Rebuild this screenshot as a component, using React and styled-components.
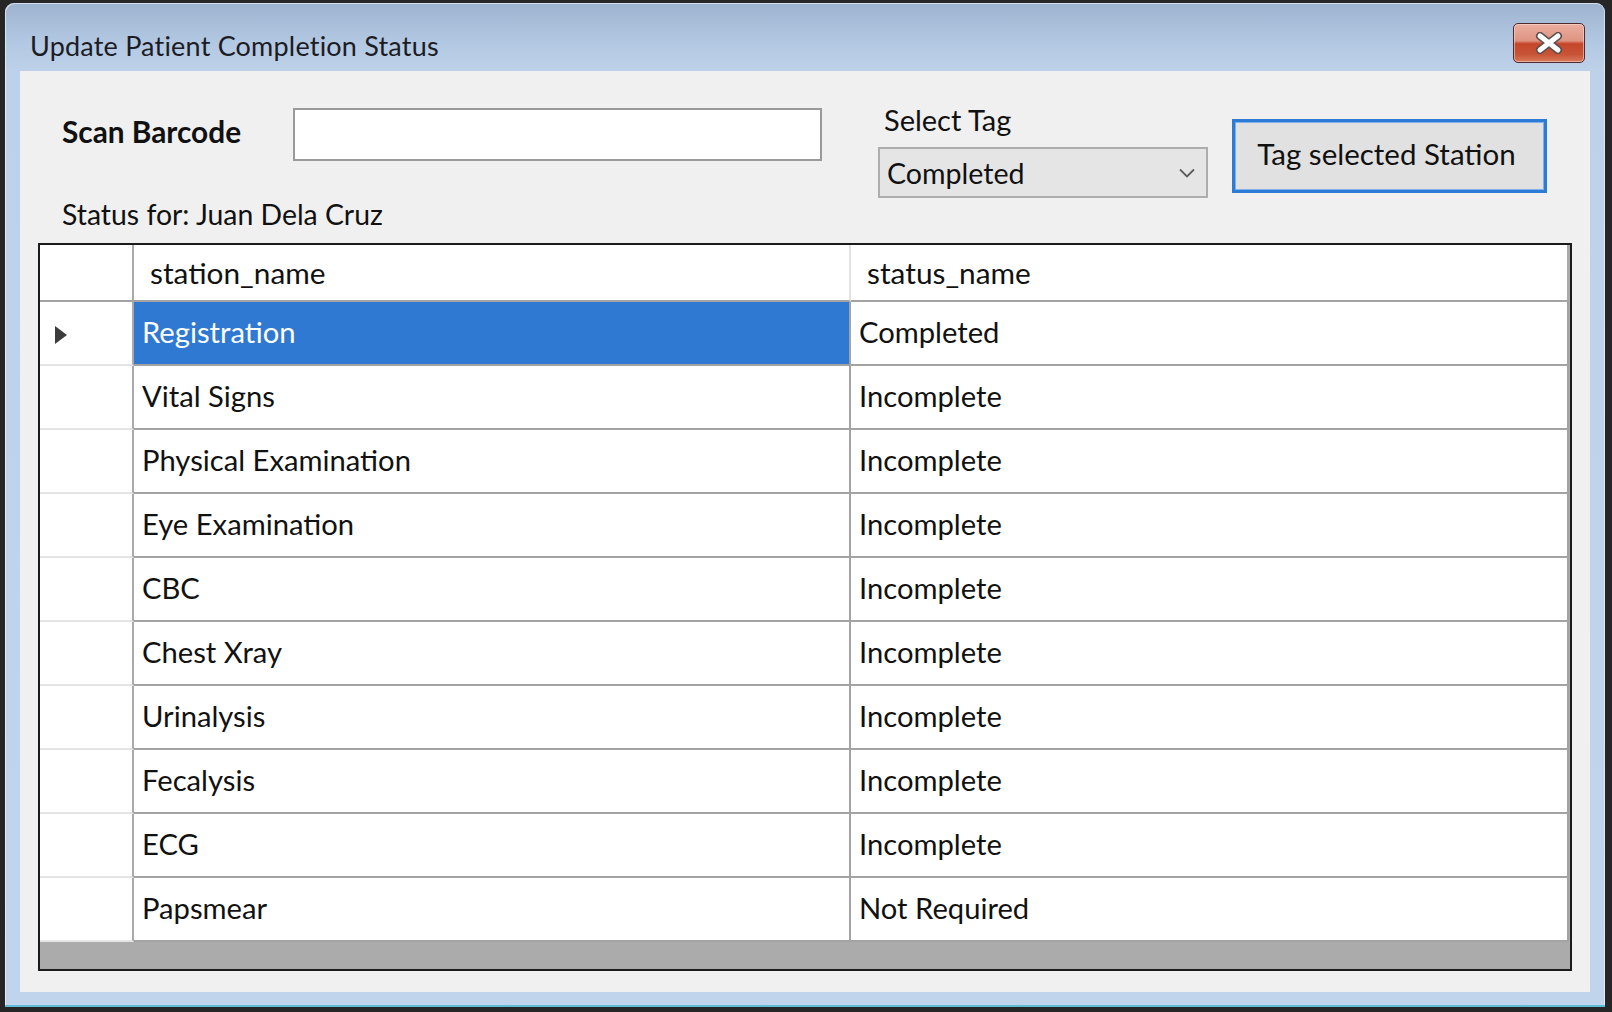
import React from "react";
import styled, { createGlobalStyle } from "styled-components";

const GlobalStyle = createGlobalStyle`
  html, body {
    margin: 0;
    padding: 0;
    width: 1612px;
    height: 1012px;
    overflow: hidden;
    background: #262626;
  }
  * { box-sizing: border-box; }
`;

const FONT = `Lato, "Open Sans", "Liberation Sans", sans-serif`;

const Window = styled.div`
  margin: 3px 7px 5px 5px;
  width: 1600px;
  height: 1004px;
  border-radius: 9px 9px 0 0;
  background: linear-gradient(to bottom, #9db3cf 0px, #b3c8e2 40px, #bdd1e9 68px, #c0d4eb 100%);
  border-bottom: 2px solid #5fbdd6;
  box-shadow: inset 1px 1px 0 rgba(255, 255, 255, 0.55), inset -1px 0 0 rgba(255, 255, 255, 0.5);
  display: flex;
  flex-direction: column;
  font-family: ${FONT};
`;

const TitleBar = styled.div`
  height: 68px;
  padding: 12px 20px 0 25px;
  display: flex;
  align-items: center;
  justify-content: space-between;
`;

const TitleText = styled.div`
  font-size: 27px;
  color: #1c1c24;
  letter-spacing: 0.2px;
  padding-top: 4px;
`;

const CloseButton = styled.div`
  width: 72px;
  height: 40px;
  border: 1px solid #4e2a30;
  border-radius: 5px;
  background: linear-gradient(
    to bottom,
    #ebaea0 0%,
    #df9482 44%,
    #c4462b 52%,
    #c75436 80%,
    #d8795d 100%
  );
  box-shadow: inset 0 0 0 1px rgba(255, 220, 210, 0.55);
  display: flex;
  align-items: center;
  justify-content: center;
`;

const Client = styled.div`
  flex: 1;
  margin: 0 15px 13px 15px;
  background: #f0f0f0;
  padding: 0 18px 21px 18px;
  display: flex;
  flex-direction: column;
`;

const Toolbar = styled.div`
  height: 172px;
  display: flex;
  align-items: flex-start;
`;

const LeftColumn = styled.div`
  padding-left: 24px;
  display: flex;
  flex-direction: column;
`;

const BarcodeRow = styled.div`
  margin-top: 37px;
  display: flex;
  align-items: center;
`;

const Label = styled.div`
  font-size: ${(p) => (p.$bold ? 29.8 : 29)}px;
  line-height: 36px;
  color: #111;
  font-weight: ${(p) => (p.$bold ? 700 : 400)};
  width: ${(p) => (p.$width ? `${p.$width}px` : "auto")};
  padding-left: ${(p) => (p.$indent ? `${p.$indent}px` : "0")};
  padding-bottom: ${(p) => (p.$bold ? 6 : 0)}px;
  white-space: nowrap;
`;

const TextInput = styled.div`
  width: 529px;
  height: 53px;
  background: #ffffff;
  border: 2px solid #9a9a9a;
`;

const StatusText = styled(Label)`
  margin-top: 35px;
  font-size: 28.4px;
`;

const TagColumn = styled.div`
  margin-left: 56px;
  padding-top: 31px;
  display: flex;
  flex-direction: column;
`;

const Select = styled.div`
  margin-top: 9px;
  width: 330px;
  height: 51px;
  background: #e5e5e5;
  border: 2px solid #adadad;
  padding: 0 11px 0 7px;
  display: flex;
  align-items: center;
  justify-content: space-between;
  font-size: 28.6px;
  color: #111;
`;

const ActionButton = styled.div`
  margin-left: 24px;
  margin-top: 48px;
  width: 315px;
  height: 74px;
  background: #e1e1e1;
  border: 3px solid #2e7bd6;
  box-shadow: inset 0 0 0 1px #7fb0ea;
  display: flex;
  align-items: center;
  justify-content: center;
  padding-bottom: 6px;
  padding-right: 6px;
  font-size: 29.5px;
  color: #111;
`;

const Grid = styled.div`
  flex: 1;
  border: 2px solid #1b1b1b;
  background: #ababab;
  display: flex;
  flex-direction: column;
`;

const Row = styled.div`
  display: grid;
  grid-template-columns: 94px 717px 718px;
  height: ${(p) => (p.$header ? 57 : 64)}px;
`;

const HeaderCell = styled.div`
  background: #ffffff;
  border-right: 2px solid ${(p) => (p.$light ? "#e2e2e2" : "#a9a9a9")};
  border-bottom: 2px solid #a3a3a3;
  padding-left: 16px;
  padding-bottom: 1px;
  display: flex;
  align-items: center;
  font-size: 29.8px;
  color: #111;
`;

const RowHeaderCell = styled.div`
  background: #ffffff;
  border-right: 2px solid #a9a9a9;
  border-bottom: 2px solid #e4e4e4;
  padding-left: 15px;
  padding-top: 4px;
  display: flex;
  align-items: center;
`;

const Cell = styled.div`
  background: ${(p) => (p.$selected ? "#3079d2" : "#ffffff")};
  color: ${(p) => (p.$selected ? "#ffffff" : "#111")};
  border-right: 2px solid #a3a3a3;
  border-bottom: 2px solid #a3a3a3;
  padding-left: 8px;
  padding-bottom: 3px;
  display: flex;
  align-items: center;
  font-size: 29.2px;
  white-space: nowrap;
`;

const rows = [
  ["Registration", "Completed"],
  ["Vital Signs", "Incomplete"],
  ["Physical Examination", "Incomplete"],
  ["Eye Examination", "Incomplete"],
  ["CBC", "Incomplete"],
  ["Chest Xray", "Incomplete"],
  ["Urinalysis", "Incomplete"],
  ["Fecalysis", "Incomplete"],
  ["ECG", "Incomplete"],
  ["Papsmear", "Not Required"],
];

const CloseGlyph = () => (
  <svg width="28" height="22" viewBox="0 0 28 22">
    <path d="M5 4 L23 18 M23 4 L5 18" stroke="#5a5050" strokeWidth="8" strokeLinecap="round" fill="none" />
    <path d="M5 4 L23 18 M23 4 L5 18" stroke="#ffffff" strokeWidth="5" strokeLinecap="round" fill="none" />
  </svg>
);

const Chevron = () => (
  <svg width="16" height="10" viewBox="0 0 16 10">
    <path d="M1 1.5 L8 8.5 L15 1.5" stroke="#5c5c5c" strokeWidth="1.8" fill="none" />
  </svg>
);

const RowArrow = () => (
  <svg width="12" height="18" viewBox="0 0 12 18">
    <path d="M0 0 L12 9 L0 18 Z" fill="#3c3c3c" />
  </svg>
);

export default function App() {
  return (
    <>
      <GlobalStyle />
      <Window>
        <TitleBar>
          <TitleText>Update Patient Completion Status</TitleText>
          <CloseButton>
            <CloseGlyph />
          </CloseButton>
        </TitleBar>
        <Client>
          <Toolbar>
            <LeftColumn>
              <BarcodeRow>
                <Label $bold $width={231}>Scan Barcode</Label>
                <TextInput />
              </BarcodeRow>
              <StatusText>Status for: Juan Dela Cruz</StatusText>
            </LeftColumn>
            <TagColumn>
              <Label $indent={6}>Select Tag</Label>
              <Select>
                <span>Completed</span>
                <Chevron />
              </Select>
            </TagColumn>
            <ActionButton>Tag selected Station</ActionButton>
          </Toolbar>
          <Grid>
            <Row $header>
              <HeaderCell />
              <HeaderCell $light>station_name</HeaderCell>
              <HeaderCell>status_name</HeaderCell>
            </Row>
            {rows.map(([station, status], i) => (
              <Row key={station}>
                <RowHeaderCell>{i === 0 ? <RowArrow /> : null}</RowHeaderCell>
                <Cell $selected={i === 0}>{station}</Cell>
                <Cell>{status}</Cell>
              </Row>
            ))}
          </Grid>
        </Client>
      </Window>
    </>
  );
}
